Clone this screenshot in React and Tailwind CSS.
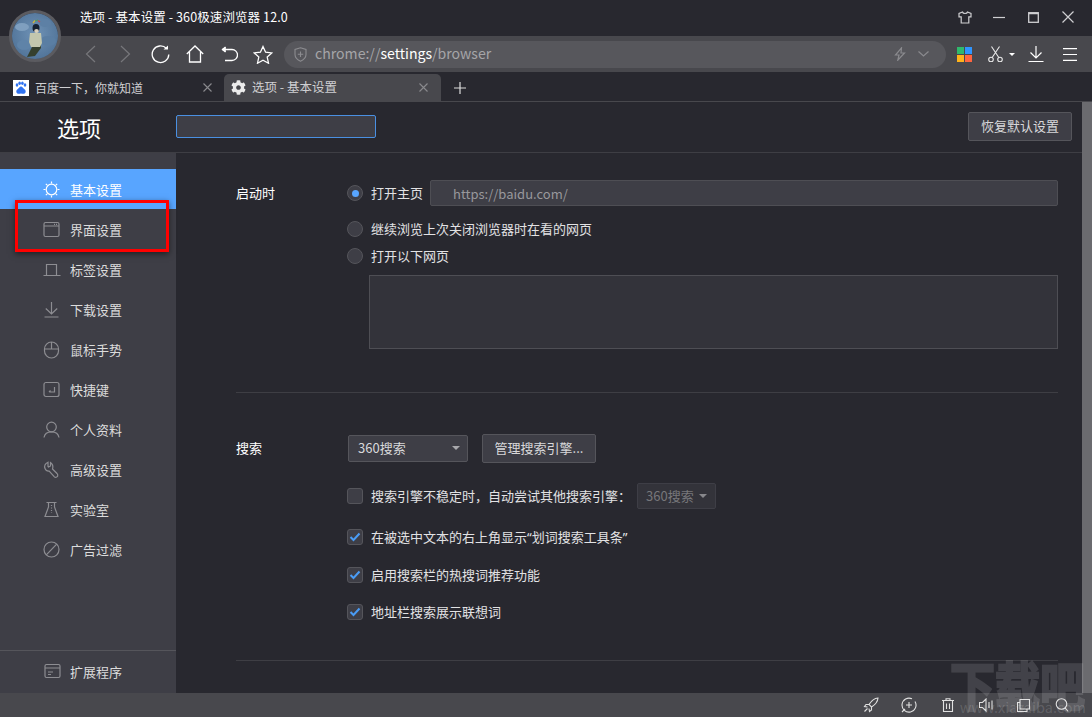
import { FaCog } from 'react-icons/fa';

const FONT = 'font-["Noto_Sans_CJK_SC","Noto_Sans",sans-serif]';

function Ico({ w = 18, h = 18, box, children, className = '', stroke = 'currentColor', sw = 1.2 }) {
  return (
    <svg width={w} height={h} viewBox={box || `0 0 ${w} ${h}`} fill="none" stroke={stroke} strokeWidth={sw} className={className}>
      {children}
    </svg>
  );
}

const sideIcons = {
  sun: <><circle cx="8.5" cy="8.5" r="5.3" /><path d="M8.5 0.5v2M8.5 14.5v2M0.5 8.5h2M14.5 8.5h2M2.8 2.8l1.4 1.4M12.8 12.8l1.4 1.4M2.8 14.2l1.4-1.4M12.8 4.2l1.4-1.4" /></>,
  win: <><rect x="1" y="1.5" width="15" height="14" rx="1.5" /><path d="M1 5h15M11 3.3h1M13 3.3h1" /></>,
  tab: <><path d="M3.5 14V3.5h10V14M0.5 14.5h17" /></>,
  down: <><path d="M8.5 1v11.5M2.8 7.5l5.7 5.5 5.7-5.5M1.5 16h14" /></>,
  mouse: <><rect x="1.5" y="1" width="14" height="16" rx="7" /><path d="M1.5 8h14M8.5 1v7" /></>,
  key: <><rect x="1" y="1.5" width="15" height="14" rx="2" /><path d="M11.5 6v5H6M6 11l1.5-1.5" /></>,
  user: <><circle cx="8.5" cy="6" r="4.8" /><path d="M1 16.5c.6-3.8 3.4-5.7 7.5-5.7s6.9 1.900 7.500 5.700" /></>,
  wrench: <><path d="M5 1.200C2.200 2.200 1 5 2 7.500c.7 1.800 2.400 2.800 4.200 2.600l5 5.500c1.500 1.500 4 .2 3.500-1.800-.1-.5-.4-.9-.7-1.300L9.500 8c.8-2.500 0-5-2-6.400V5L5.500 6 5 5.500z" /></>,
  lab: <><path d="M3.500 1.500h10M5.500 1.500V6L2 15.500h13L11.500 6V1.500" /><path d="M8.500 4v8" strokeDasharray="1 1.500" /></>,
  ban: <><circle cx="8.500" cy="8.500" r="7.500" /><path d="M3.300 13.800 13.700 3.200" /></>,
  ext: <><rect x="1" y="1.500" width="15" height="13" rx="1.500" /><path d="M1 5h15M4 9h5M4 11.500h3" /></>,
};

const sideItems = [
  ['sun', '基本设置'],
  ['win', '界面设置'],
  ['tab', '标签设置'],
  ['down', '下载设置'],
  ['mouse', '鼠标手势'],
  ['key', '快捷键'],
  ['user', '个人资料'],
  ['wrench', '高级设置'],
  ['lab', '实验室'],
  ['ban', '广告过滤'],
];

function SideRow({ icon, label, active }) {
  return (
    <div className={`h-10 pt-px flex items-center pl-[43px] text-[13px] ${active ? 'bg-[#58a5ff] text-white' : 'text-[#dcdcdc]'}`}>
      <Ico className={`w-[18px] ${active ? 'text-white' : 'text-[#8d8d92]'}`}>{sideIcons[icon]}</Ico>
      <span className="ml-[9px]">{label}</span>
    </div>
  );
}

function Radio({ on }) {
  return (
    <span className="w-4 h-4 rounded-full bg-[#3e3e46] border border-[#55555b] flex items-center justify-center shrink-0">
      {on && <span className="w-[7px] h-[7px] rounded-full bg-[#58a5ff]" />}
    </span>
  );
}

function Check({ on }) {
  return (
    <span className="w-4 h-4 rounded-[3px] bg-[#3e3e46] border border-[#55555b] flex items-center justify-center shrink-0">
      {on && (
        <svg width="12" height="10" viewBox="0 0 12 10" fill="none" stroke="#4a9cf5" strokeWidth="2">
          <path d="M1.500 5l3 3 6-6.500" />
        </svg>
      )}
    </span>
  );
}

function Caret({ color = '#a8a8ac' }) {
  return <span className="w-0 h-0 border-x-4 border-x-transparent border-t-[4px]" style={{ borderTopColor: color }} />;
}

export default function App() {
  return (
    <div className={`relative w-full h-[717px] overflow-hidden flex flex-col bg-[#28282f] text-[13px] ${FONT}`}>
      {/* avatar */}
      <div className="absolute left-[9px] top-[10px] w-[52px] h-[52px] rounded-full border-[3px] border-[#5b5b60] overflow-hidden z-10">
        <svg width="46" height="46" viewBox="0 0 46 46">
          <defs>
            <radialGradient id="av" cx="50%" cy="45%" r="70%">
              <stop offset="0" stopColor="#6f92b6" />
              <stop offset="1" stopColor="#4a6d92" />
            </radialGradient>
            <filter id="soft"><feGaussianBlur stdDeviation="0.7" /></filter>
          </defs>
          <rect width="46" height="46" fill="url(#av)" />
          <g filter="url(#soft)">
            <ellipse cx="10" cy="14" rx="7" ry="4" fill="#7f9fbf" />
            <ellipse cx="36" cy="28" rx="8" ry="5" fill="#5a7ea3" />
            <ellipse cx="12" cy="32" rx="7" ry="5" fill="#5f83a8" />
            <ellipse cx="33" cy="10" rx="6" ry="4" fill="#5d80a5" />
            <path d="M15 44l5-10 9-3 0 4-6 8z" fill="#35402e" />
            <path d="M18 20h11l1 10-2 4h-9l-2-5z" fill="#c3c7ae" />
            <ellipse cx="24" cy="15" rx="3.500" ry="4" fill="#182030" />
            <ellipse cx="24.500" cy="18" rx="2.300" ry="2" fill="#d8d0bc" />
          </g>
          <path d="M21 10l2-2.500" stroke="#d0b43c" strokeWidth="1.300" />
          <path d="M23 8l3-1" stroke="#4aa35a" strokeWidth="1.300" />
          <path d="M26 7.500l2 1.500" stroke="#c8504a" strokeWidth="1.300" />
        </svg>
      </div>

      {/* title bar */}
      <div className="h-9 shrink-0 pl-[80px] pr-[18px] pb-[2px] flex items-center justify-between">
        <span className="text-[12.500px] text-white tracking-[0.1px]">选项 - 基本设置 - 360极速浏览器 12.0</span>
        <div className="flex items-center text-[#cfcfd2]">
          <Ico w={14} h={13} sw={1.200}><path d="M4.500 1 1 2.500v3.300h2.200V12h7.600V5.800H13V2.500L9.500 1C9 3 5 3 4.500 1z" /></Ico>
          <Ico w={12} h={12} className="ml-[21px]"><path d="M0 6.500h12" /></Ico>
          <Ico w={11} h={11} sw={1.300} className="ml-[23px]"><rect x="0.700" y="0.700" width="9.600" height="9.600" /><path d="M0.700 1.600h9.600" /></Ico>
          <Ico w={12} h={12} className="ml-[23px]"><path d="M0.500 0.500l11 11M11.500 0.500l-11 11" /></Ico>
        </div>
      </div>

      {/* toolbar */}
      <div className="h-9 shrink-0 bg-[#48484d] flex items-center pl-[73px] text-white">
        <div className="w-[35px] flex justify-center text-[#77777b]"><Ico w={11} h={18}><path d="M10 1 1.500 9l8.500 8" /></Ico></div>
        <div className="w-[35px] flex justify-center text-[#77777b]"><Ico w={11} h={18}><path d="M1 1l8.500 8L1 17" /></Ico></div>
        <div className="w-[35px] flex justify-center">
          <Ico w={19} h={19} sw={1.300}><path d="M15.500 3.500A8.300 8.300 0 1 0 17.800 9.500" /><path d="M12.500 4.500h4.500V0.500z" fill="currentColor" stroke="none" /></Ico>
        </div>
        <div className="w-[34px] flex justify-center">
          <Ico w={18} h={18} sw={1.300}><path d="M0.800 9 9 1l8.200 8M3.500 7v10h11V7" /></Ico>
        </div>
        <div className="w-[34px] flex justify-center">
          <Ico w={17} h={16} sw={1.300}><path d="M1 3.500h10a4.500 4.500 0 0 1 0 11H4" /><path d="M4.800 0.800 1.500 3.500l3.300 2.700" fill="currentColor" stroke="none" /><path d="M4.500 1 1.500 3.500l3 2.500" /></Ico>
        </div>
        <div className="w-[34px] flex justify-center">
          <Ico w={20} h={19} sw={1.300}><path d="M10 1.500l2.600 5.700 6.200.7-4.600 4.200 1.300 6.100L10 15.200l-5.500 3 1.300-6.100L1.200 7.900l6.200-.7z" /></Ico>
        </div>
        <div className="ml-[4px] w-[662px] h-[27px] rounded-full bg-[#57575c] flex items-center pl-[10px] pr-[17px]">
          <Ico w={13} h={15} className="text-[#8c8c90]" sw={1.100}><path d="M6.500 0.800 12 2.500v5c0 3-2.500 5.300-5.500 6.700C3.500 12.800 1 10.500 1 7.500v-5zM6.500 4.500v5.500M3.800 7.200h5.400" /></Ico>
          <span className="ml-[8px] pb-[2px] text-[14.100px] leading-none text-[#a5a5a8]">chrome://<span className="text-white">settings</span>/browser</span>
          <Ico w={12} h={14} className="ml-auto text-[#8a8a8e]" sw={1.200}><path d="M7.500 0.800 1.500 8h3.500L3.800 13.200 10.500 6H7z" /></Ico>
          <Ico w={11} h={6} className="ml-[12px] text-[#8a8a8e]"><path d="M0.500 0.500 5.500 5l5-4.500" /></Ico>
        </div>
        <div className="ml-[11px] w-[15px] h-[15px] grid grid-cols-2 gap-px">
          <span className="bg-[#2fb96c]" />
          <span className="bg-[#2f95ff]" />
          <span className="bg-[#ffb31a]" />
          <span className="bg-[#ff6540]" />
        </div>
        <Ico w={15} h={16} className="ml-[16px] text-[#e8e8e8]" sw={1.100}>
          <circle cx="3" cy="13.500" r="2.300" /><circle cx="12" cy="13.500" r="2.300" /><path d="M4.200 11.500 11.500 0.500M10.800 11.500 3.500 0.500" />
        </Ico>
        <span className="ml-[6px]"><span className="block w-0 h-0 border-x-[3px] border-x-transparent border-t-[3px] border-t-white" /></span>
        <Ico w={16} h={16} className="ml-[13px]" sw={1.200}><path d="M8 0v12M2.500 6.500 8 12l5.500-5.500M0.500 15.500h15" /></Ico>
        <Ico w={14} h={13} className="ml-[19px]" sw={1.200}><path d="M0 0.700h14M0 6.500h14M0 12.300h14" /></Ico>
      </div>

      {/* tab strip */}
      <div className="h-[30px] shrink-0 border-b border-[#48484d] flex items-end text-[12.500px]">
        <div className="w-[224px] h-[27px] pl-[13px] pr-[12px] flex items-center text-[#cfcfd2]">
          <span className="w-4 h-4 bg-white flex items-center justify-center shrink-0">
            <svg width="14" height="14" viewBox="0 0 14 14" fill="#2f72f0">
              <ellipse cx="3" cy="4" rx="1.300" ry="1.800" />
              <ellipse cx="5.600" cy="2.200" rx="1.300" ry="1.800" />
              <ellipse cx="8.400" cy="2.200" rx="1.300" ry="1.800" />
              <ellipse cx="11" cy="4" rx="1.300" ry="1.800" />
              <path d="M7 5.500c-1.500 0-2 1.500-3.200 2.500C2.500 9 2 10 2.500 11.500c.5 1.300 2 1.500 4.500 1 2.500.5 4 .3 4.500-1 .5-1.500 0-2.500-1.300-3.500C9 7 8.500 5.500 7 5.500z" />
            </svg>
          </span>
          <span className="ml-[6px] text-[12px]">百度一下，你就知道</span>
          <Ico w={9} h={9} className="ml-auto text-[#8a8a8e]" sw={1.100}><path d="M0.500 0.500l8 8M8.500 0.500l-8 8" /></Ico>
        </div>
        <div className="w-[217px] h-[27px] pl-[7px] pr-[13px] rounded-t-[5px] bg-[#48484d] flex items-center text-[#cfcfd2]">
          <FaCog size={15} className="text-[#ececec] shrink-0" />
          <span className="ml-[6px]">选项 - 基本设置</span>
          <Ico w={9} h={9} className="ml-auto text-[#8a8a8e]" sw={1.100}><path d="M0.500 0.500l8 8M8.500 0.500l-8 8" /></Ico>
        </div>
        <div className="w-[38px] h-[27px] flex items-center justify-center text-[#dcdcdc]">
          <Ico w={12} h={12}><path d="M6 0v12M0 6h12" /></Ico>
        </div>
      </div>

      {/* page */}
      <div className="flex-1 min-h-0 flex">
        <div className="flex-1 min-w-0 flex flex-col">
          <div className="h-[51px] shrink-0 border-b border-[#3e3e44] flex items-center">
            <div className="w-[176px] pl-[57px] text-[22px] leading-none text-white">选项</div>
            <div className="w-[200px] h-[23px] -mt-[2px] bg-[#3e3e46] border border-[#4a90e2] rounded-[2px]" />
            <button className="ml-auto mr-[10px] w-[104px] h-[29px] -mt-[2px] bg-[#3e3e46] border border-[#55555b] rounded-[2px] text-[#d8d8da]">恢复默认设置</button>
          </div>

          <div className="flex-1 min-h-0 flex">
            <aside className="w-[176px] shrink-0 bg-[#3e3e46] flex flex-col pt-4">
              {sideItems.map(([icon, label], i) => (
                <SideRow key={label} icon={icon} label={label} active={i === 0} />
              ))}
              <div className="mt-auto border-t border-[#55555b] h-[43px] flex items-center pl-[44px] text-[#dcdcdc]">
                <Ico className="w-[18px] text-[#8d8d92]">{sideIcons.ext}</Ico>
                <span className="ml-[8px]">扩展程序</span>
              </div>
            </aside>

            <main className="flex-1 min-w-0 pl-[60px] pr-6 text-[#e2e2e4] overflow-hidden">
              <section className="pt-[27px] h-[240px] border-b border-[#3e3e44]">
                <div className="flex items-center h-[26px]">
                  <span className="w-[111px] text-white">启动时</span>
                  <Radio on />
                  <span className="ml-2">打开主页</span>
                  <div className="ml-[7px] flex-1 h-[26px] pt-px bg-[#3e3e46] border border-[#4e4e54] rounded-[2px] pl-[22px] flex items-center text-[#98989c]">https://baidu.com/</div>
                </div>
                <div className="flex items-center h-[20px] mt-[13px] pl-[111px]">
                  <Radio />
                  <span className="ml-2">继续浏览上次关闭浏览器时在看的网页</span>
                </div>
                <div className="flex items-center h-[20px] mt-[7px] pl-[111px]">
                  <Radio />
                  <span className="ml-2">打开以下网页</span>
                </div>
                <div className="ml-[133px] mt-[9px] h-[74px] bg-[#33333a] border border-[#4e4e54]" />
              </section>

              <section className="pt-[40px] h-[268px] border-b border-[#3e3e44]">
                <div className="flex items-center h-[30px]">
                  <span className="w-[112px] text-white">搜索</span>
                  <div className="w-[120px] h-[27px] bg-[#3e3e46] border border-[#55555b] rounded-[2px] pl-[9px] pr-[7px] flex items-center justify-between text-[#d8d8da]">
                    360搜索<Caret />
                  </div>
                  <button className="ml-[14px] w-[114px] h-[29px] bg-[#3e3e46] border border-[#55555b] rounded-[2px] text-[#d8d8da]">管理搜索引擎...</button>
                </div>
                <div className="flex items-center h-[26px] mt-[20px] pl-[111px]">
                  <Check />
                  <span className="ml-2">搜索引擎不稳定时，自动尝试其他搜索引擎：</span>
                  <div className="ml-[6px] w-[79px] h-[26px] bg-[#33333a] border border-[#3e3e46] rounded-[2px] pl-[8px] pr-[8px] flex items-center justify-between text-[#77777b]">
                    360搜索<Caret color="#88888c" />
                  </div>
                </div>
                <div className="flex items-center h-[20px] mt-[18px] pl-[111px]">
                  <Check on />
                  <span className="ml-2">在被选中文本的右上角显示<span className='font-["Noto_Sans"]'>“</span>划词搜索工具条<span className='font-["Noto_Sans"]'>”</span></span>
                </div>
                <div className="flex items-center h-[20px] mt-[18px] pl-[111px]">
                  <Check on />
                  <span className="ml-2">启用搜索栏的热搜词推荐功能</span>
                </div>
                <div className="flex items-center h-[20px] mt-[17px] pl-[111px]">
                  <Check on />
                  <span className="ml-2">地址栏搜索展示联想词</span>
                </div>
              </section>
            </main>
          </div>
        </div>
        <div className="w-[10px] shrink-0 bg-[#6b6b6f]" />
      </div>

      {/* status bar */}
      <div className="h-6 shrink-0 bg-[#48484d] flex items-center justify-end pr-[23px] text-[#e0e0e0]">
        <Ico w={16} h={16} sw={1.100}><path d="M15 1c-4 .3-6.500 2.500-9 6.500l2.500 2.500c4-2.500 6.200-5 6.500-9zM6 7.500H3L1.500 9.500l3 .5M8.500 10v3l-2 1.500-.5-3M4.500 11.500 1.500 14.500" /></Ico>
        <Ico w={16} h={16} sw={1.100} className="ml-[22px]"><path d="M14 4.500A7 7 0 1 1 11 1.800M1 15 4 12M8 5v6M5 8h6" /></Ico>
        <Ico w={12} h={14} sw={1.100} className="ml-[25px]"><path d="M0 2.500h12M4 2.500V0.700h4v1.800M1.500 2.500v11h9v-11M4.500 5.500v5.500M7.500 5.500v5.500" /></Ico>
        <Ico w={14} h={14} sw={1.100} className="ml-[25px]"><path d="M0.500 4.500v5h3L7 13V1L3.500 4.500zM10 4v6M13 2.500v9" /></Ico>
        <Ico w={13} h={13} sw={1.100} className="ml-[24px]"><path d="M3 0.500h9.500V10H3zM3 3.500H0.500v9H10V10" /></Ico>
        <Ico w={14} h={14} sw={1.100} className="ml-[25px]"><circle cx="6.500" cy="6" r="5.300" /><path d="M10.200 10l3 3.500" /></Ico>
      </div>

      {/* red annotation around the second sidebar row */}
      <div className="absolute left-[15px] top-[200px] w-[154px] h-[52px] border-[3px] border-[#ff0000] shadow-[0_2px_6px_rgba(0,0,0,0.5)]" />

      {/* watermark */}
      <div className="absolute right-[7px] top-[660px] text-[45px] leading-[48px] font-bold text-white opacity-[0.12] [-webkit-text-stroke:2px_#ffffff] scale-y-[1.15] pointer-events-none">下载吧</div>
      <div className="absolute right-[6px] top-[700px] text-[14.500px] leading-none text-white/15 pointer-events-none">www.xiazaiba.com</div>
    </div>
  );
}
